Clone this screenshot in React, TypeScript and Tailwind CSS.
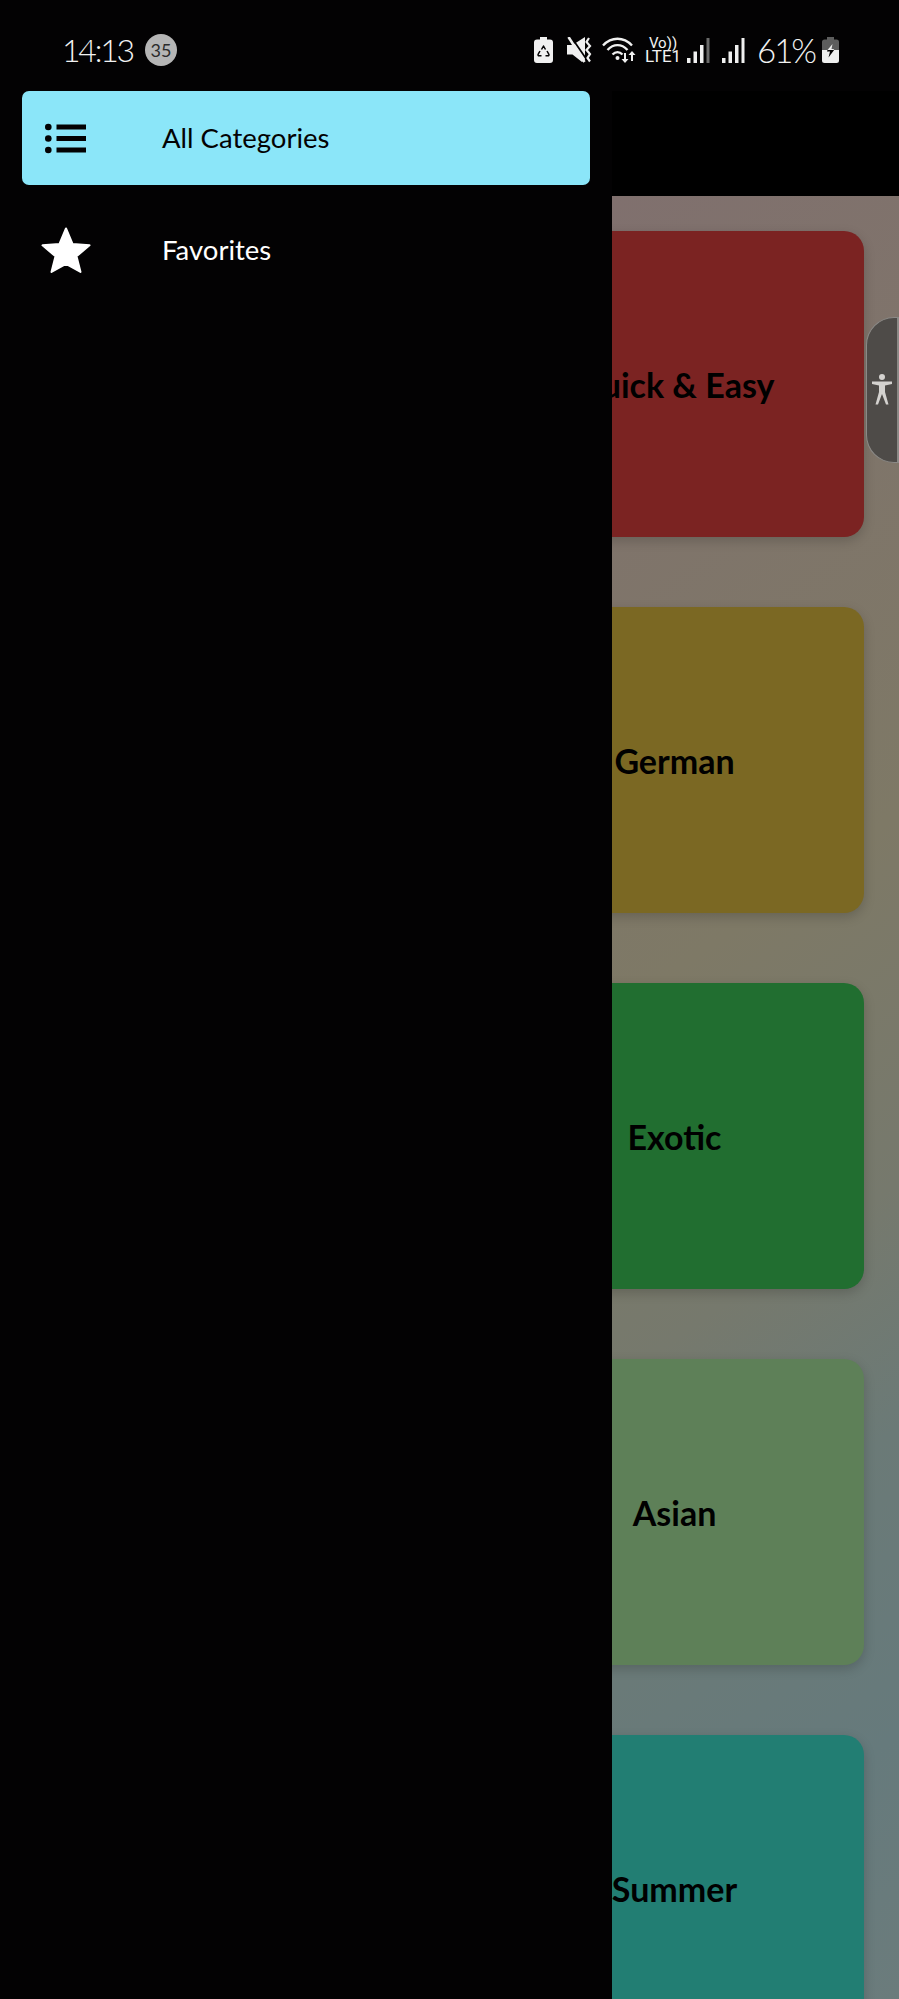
const categories = [
  { title: "Quick & Easy", color: "bg-[#7b2322]" },
  { title: "German", color: "bg-[#7b6823]" },
  { title: "Exotic", color: "bg-[#216e30]" },
  { title: "Asian", color: "bg-[#5e8058]" },
  { title: "Summer", color: "bg-[#227e73]" },
];

function BatteryRecycle() {
  return (
    <svg width="19" height="26" viewBox="0 0 19 26" className="text-[#f0f0f0]">
      <path
        fill="currentColor"
        d="M6 0h7v2.500h3a3 3 0 0 1 3 3V23a3 3 0 0 1-3 3H3a3 3 0 0 1-3-3V5.500a3 3 0 0 1 3-3h3z"
      />
      <g fill="none" stroke="#030203" strokeWidth="1.500" strokeLinejoin="round">
        <path d="M7.500 12.500 9.500 9l2 3.500" />
        <path d="M13 14l1.800 3.200a1 1 0 0 1-.9 1.600H11.500" />
        <path d="M7.500 18.800H5.100a1 1 0 0 1-.9-1.600L6 14" />
      </g>
    </svg>
  );
}

function MuteIcon() {
  return (
    <svg width="25" height="26" viewBox="0 0 25 26" className="text-[#f0f0f0]">
      <path fill="currentColor" d="M0 8h5.500L18 0v22.500L15 25 5.500 17.500H0z" />
      <path stroke="#030203" strokeWidth="1.800" d="M3.500 -1 20 23" />
      <path stroke="currentColor" strokeWidth="2.600" d="M1.500 0 17.500 25" />
      <path
        fill="none"
        stroke="currentColor"
        strokeWidth="2.200"
        d="M22 1l-2.500 4 3.500 4-3.500 4 3.500 4-2.500 4 2.500 3.500"
      />
    </svg>
  );
}

function WifiIcon() {
  return (
    <svg width="35" height="26" viewBox="0 0 35 26" className="text-[#f0f0f0]">
      <g fill="none" stroke="currentColor" strokeWidth="2.400">
        <path d="M1 8.500C9.500 -0.500 21.500 -0.500 30 8.500" />
        <path d="M5.500 13C11.500 6.500 19.500 6.500 25.500 13" />
        <path d="M10.500 17.500C13.500 14.500 17.500 14.500 20.500 17.500" />
      </g>
      <circle cx="15.500" cy="21" r="2" fill="currentColor" />
      <path fill="currentColor" d="M22 16h2v6h2.500l-3.500 4-3.500-4H22z" />
      <path fill="currentColor" d="M31 24h-2v-6h-2.500l3.500-4 3.500 4H31z" />
    </svg>
  );
}

function SignalIcon({ faded }: { faded?: boolean }) {
  return (
    <svg width="23" height="25" viewBox="0 0 23 25" className="text-[#f0f0f0]">
      <rect x="0" y="20" width="3.500" height="5" fill="currentColor" />
      <rect x="6.500" y="13.500" width="3.500" height="11.500" fill="currentColor" />
      <rect x="13" y="7" width="3.500" height="18" fill="currentColor" />
      <rect x="19.500" y="0" width="3" height="25" fill={faded ? "#6a6a6a" : "currentColor"} />
    </svg>
  );
}

function ChargingBattery() {
  return (
    <svg width="17" height="26" viewBox="0 0 17 26">
      <path
        fill="#5d5d5d"
        d="M5 0h7v2.500h2.500A2.500 2.500 0 0 1 17 5v8H0V5a2.500 2.500 0 0 1 2.500-2.500H5z"
      />
      <path
        fill="#efefef"
        d="M0 13h17v10.500a2.500 2.500 0 0 1-2.500 2.500h-12A2.500 2.500 0 0 1 0 23.500z"
      />
      <path fill="#efefef" d="M10.500 7 5.500 13h6l1-1h-3z" />
      <path fill="#030203" d="M5.500 13 5 14.500h3l-1.500 6 6-8-1 .5z" />
    </svg>
  );
}

function ListIcon() {
  return (
    <svg width="50" height="34" viewBox="0 0 50 34" className="text-[#030203]">
      <circle cx="7.300" cy="6" r="3.300" fill="currentColor" />
      <circle cx="7.300" cy="17.500" r="3.300" fill="currentColor" />
      <circle cx="7.300" cy="29" r="3.300" fill="currentColor" />
      <rect x="15.500" y="3.500" width="29.500" height="5" fill="currentColor" />
      <rect x="15.500" y="15" width="29.500" height="5" fill="currentColor" />
      <rect x="15.500" y="26.500" width="29.500" height="5" fill="currentColor" />
    </svg>
  );
}

function StarIcon() {
  return (
    <svg width="50" height="46" viewBox="0 0 50 46" className="text-white">
      <path
        fill="currentColor"
        stroke="currentColor"
        strokeWidth="2"
        strokeLinejoin="round"
        d="M25 1.500 31.500 17 48.500 18.300 35.500 29.300 39.500 45 25 36.800 10.500 45 14.500 29.300 1.500 18.300 18.500 17z"
      />
    </svg>
  );
}

export default function App() {
  return (
    <div className="relative flex h-[1999px] w-[899px] flex-col overflow-hidden bg-black font-['Lato',sans-serif]">
      {/* status bar */}
      <div className="flex h-[91px] shrink-0 items-start bg-[#030203] pl-[62px] pr-[60px] pt-[34px] text-[#f2f2f2]">
        <span className="text-[32px] font-light leading-[32px] tracking-[-2.200px]">14:13</span>
        <span className="ml-[12px] flex h-[32px] w-[32px] items-center justify-center rounded-full bg-[#b5b5b5] text-[18px] text-[#2b2b2b]">
          35
        </span>
        <div className="ml-auto flex items-center pt-[3px]">
          <BatteryRecycle />
          <div className="ml-[14px]">
            <MuteIcon />
          </div>
          <div className="ml-[10px]">
            <WifiIcon />
          </div>
          <div className="ml-[9px] flex w-[34px] flex-col items-center font-['Roboto',sans-serif] leading-[13px]">
            <span className="text-[15px]">Vo))</span>
            <span className="text-[17px]">LTE1</span>
          </div>
          <div className="ml-[7px]">
            <SignalIcon faded />
          </div>
          <div className="ml-[12px]">
            <SignalIcon />
          </div>
          <span className="ml-[12px] w-[58px] whitespace-nowrap text-[33px] font-light leading-[26px] tracking-[-2px]">
            61%
          </span>
          <div className="ml-[7px]">
            <ChargingBattery />
          </div>
        </div>
      </div>

      <div className="flex min-h-0 flex-1">
        {/* drawer */}
        <div className="flex w-[612px] shrink-0 flex-col gap-[20px] bg-[#030203] px-[22px]">
          <div className="flex h-[94px] items-center rounded-[7px] bg-[#8be6f9] text-[#030203]">
            <div className="w-[140px] pl-[19px]">
              <ListIcon />
            </div>
            <span className="text-[27.500px] leading-none">All Categories</span>
          </div>
          <div className="flex h-[90px] items-center text-white">
            <div className="w-[140px] pl-[19px]">
              <StarIcon />
            </div>
            <span className="text-[27.500px] leading-none">Favorites</span>
          </div>
        </div>

        {/* dimmed page behind the drawer */}
        <div className="flex min-w-0 flex-1 flex-col overflow-hidden">
          <div className="h-[105px] shrink-0 bg-black" />
          <div className="flex flex-1 flex-col gap-[70px] bg-[linear-gradient(145deg,#80706e_0%,#7e7966_40%,#76796d_58%,#6b7a77_70%,#667a7c_85%,#6c7c7c_100%)] pt-[35px]">
            {categories.map((c) => (
              <div
                key={c.title}
                className={`ml-[-127px] mr-[35px] flex h-[306px] shrink-0 items-center justify-center rounded-[20px] shadow-[0_4px_12px_rgba(0,0,0,0.18)] ${c.color}`}
              >
                <span className="whitespace-nowrap text-[34px] font-bold text-black">{c.title}</span>
              </div>
            ))}
          </div>
        </div>
      </div>

      {/* accessibility handle */}
      <div className="absolute left-[866px] top-[317px] flex h-[146px] w-[33px] items-center justify-center rounded-l-[28px] border border-r-2 border-[#8b8986] bg-[#4e4b48]">
        <svg width="22" height="32" viewBox="0 0 22 32" className="text-[#d4d2cf]">
          <circle cx="11" cy="3" r="3" fill="currentColor" />
          <path
            fill="currentColor"
            d="M1 7.500h20v2.500l-7 1.500v6.500l3.500 12.500h-2.500L11 20l-4 10.500H4.500L8 18v-6.500L1 10z"
          />
        </svg>
      </div>
    </div>
  );
}
